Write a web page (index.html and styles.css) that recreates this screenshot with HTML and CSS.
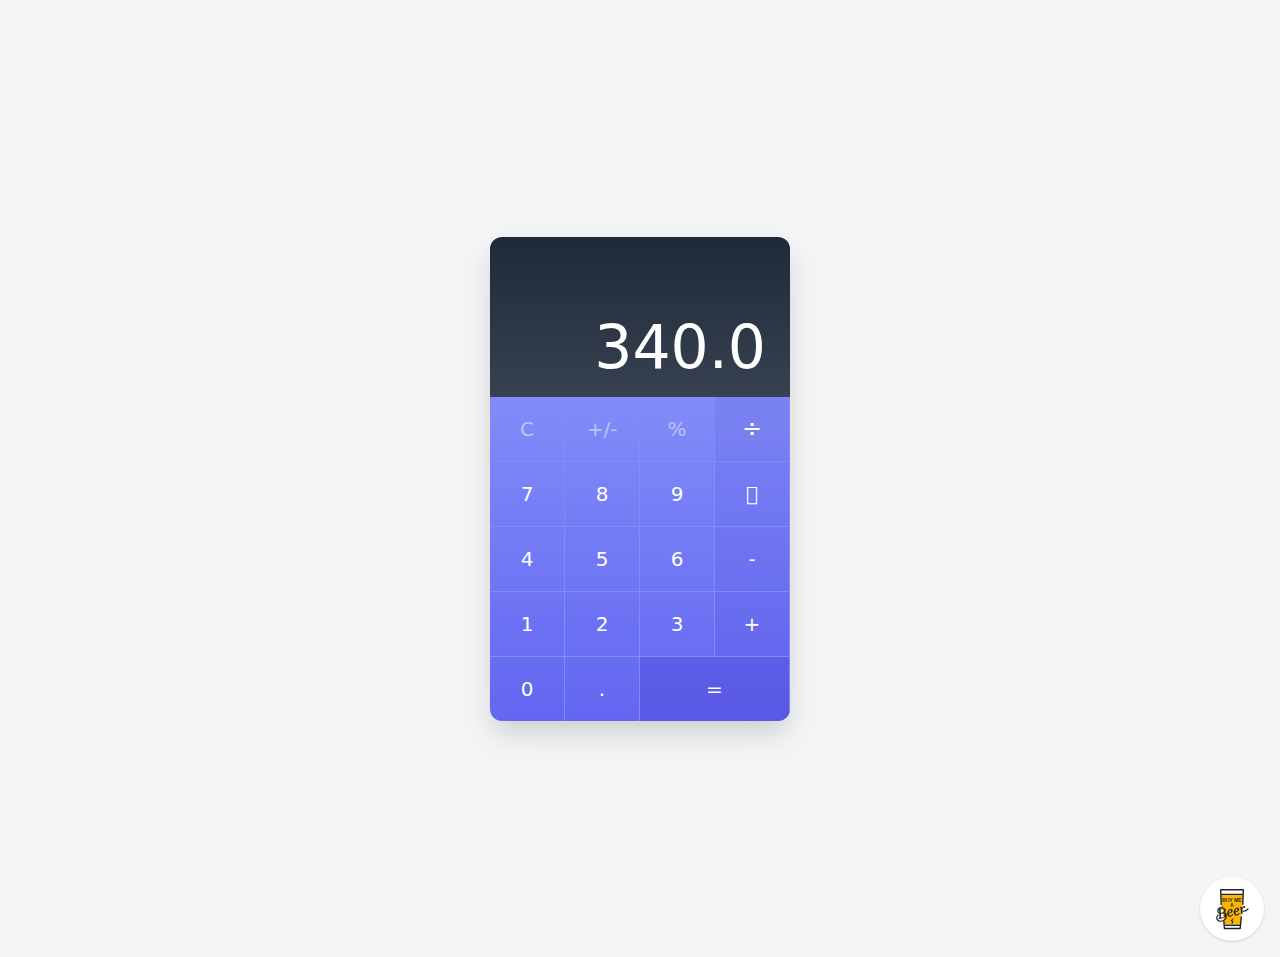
FILE: index.html
```html
<!DOCTYPE html>
<html lang="en">
<head>
<meta charset="utf-8">
<meta name="viewport" content="width=device-width, initial-scale=1">
<title>Calculator</title>
<link rel="stylesheet" href="styles.css">
</head>
<body>
<main class="page">
  <section class="calculator" aria-label="Calculator">
    <output class="display">340.0</output>
    <div class="keypad">
      <div class="row">
        <button class="key muted" type="button">C</button>
        <button class="key muted" type="button">+/-</button>
        <button class="key muted" type="button">%</button>
        <button class="key operator large" type="button">÷</button>
      </div>
      <div class="row">
        <button class="key" type="button">7</button>
        <button class="key" type="button">8</button>
        <button class="key" type="button">9</button>
        <button class="key operator" type="button" aria-label="Multiply">&#xE000;</button>
      </div>
      <div class="row">
        <button class="key" type="button">4</button>
        <button class="key" type="button">5</button>
        <button class="key" type="button">6</button>
        <button class="key operator" type="button">-</button>
      </div>
      <div class="row">
        <button class="key" type="button">1</button>
        <button class="key" type="button">2</button>
        <button class="key" type="button">3</button>
        <button class="key operator" type="button">+</button>
      </div>
      <div class="row">
        <button class="key" type="button">0</button>
        <button class="key" type="button">.</button>
        <button class="key equals" type="button">=</button>
      </div>
    </div>
  </section>
</main>
<a class="beer" href="#" aria-label="Buy me a beer">
  <svg viewBox="0 0 64 64" aria-hidden="true">
    <path d="M20.8 12.7h22.4l-.5 15-1.9 13-.6 10.5H24.4l-.6-10.5-2.3-13z" fill="#fff"/>
    <path d="M21 17.5h22l-.4 10-1.9 13-.4 6.5H24.3l-.5-6.5-2.3-13z" fill="#fcb400"/>
    <path d="M21.2 28l-.5-15.3h22.6l-.5 15M41.3 39.5l-1.1 12H24.4l-.6-8M21 17.4h22M24.4 48.2h15.8" fill="none" stroke="#222" stroke-width="1.4" stroke-linejoin="round"/>
    <text class="beer-caption" x="32" y="25" text-anchor="middle">BUY ME</text>
    <text class="beer-caption" x="32" y="30" text-anchor="middle">A</text>
    <text class="beer-script" x="18.5" y="42" transform="rotate(-12 18.5 42)">Beer</text>
    <path d="M23 30c-6 0-7 6-2 7M18 38c-3 4 0 7 4 6s6-5 2-6M43 34c2 1 3 0 5-2" fill="none" stroke="#222" stroke-width="1.2" stroke-linecap="round"/>
    <path d="M33 41.5l-2 2.5h2l-1 2.8" fill="none" stroke="#222" stroke-width="1"/>
  </svg>
</a>
</body>
</html>
```
FILE: styles.css
```css
* { box-sizing: border-box; }
body {
  margin: 0;
  background: #f3f4f6;
  font-family: "DejaVu Sans", sans-serif;
}
.page {
  display: flex;
  align-items: center;
  justify-content: center;
  min-height: 100vh;
}
.calculator {
  width: 300px;
  overflow: hidden;
  border-radius: 12px;
  box-shadow: 0 15px 25px -5px rgba(0, 0, 0, .1), 0 15px 35px rgba(0, 0, 0, .06);
  color: #fff;
}
.display {
  display: flex;
  align-items: flex-end;
  justify-content: flex-end;
  min-height: 160px;
  padding: 20px 24px;
  background: linear-gradient(#1f2937, #374151);
  font-size: 60px;
  line-height: 60px;
}
.keypad { background: linear-gradient(#818cf8, #6366f1); }
.row {
  display: grid;
  grid-template-columns: repeat(4, 1fr);
  border-bottom: 1px solid #818cf8;
}
.row:last-child { border-bottom: 0; }
.key {
  height: 64px;
  margin: 0;
  padding: 0;
  border: 0;
  border-right: 1px solid #818cf8;
  background: transparent;
  color: #fff;
  font: 20px/28px "DejaVu Sans", sans-serif;
  cursor: pointer;
}
.muted { color: rgba(255, 255, 255, .5); }
.operator { background: rgba(67, 56, 202, .1); }
.large { font-size: 24px; }
.equals {
  grid-column: span 2;
  background: rgba(67, 56, 202, .3);
}
.beer {
  position: fixed;
  right: 16px;
  bottom: 16px;
  width: 64px;
  height: 64px;
  border-radius: 50%;
  background: #fff;
  box-shadow: 0 1px 3px rgba(0, 0, 0, .1), 0 1px 2px rgba(0, 0, 0, .06);
}
.beer svg { display: block; }
.beer-caption {
  fill: #222;
  font: bold 5px "Liberation Sans", sans-serif;
}
.beer-script {
  fill: #222;
  stroke: #222;
  stroke-width: .3;
  font: italic 15px "Liberation Serif", serif;
}
```
